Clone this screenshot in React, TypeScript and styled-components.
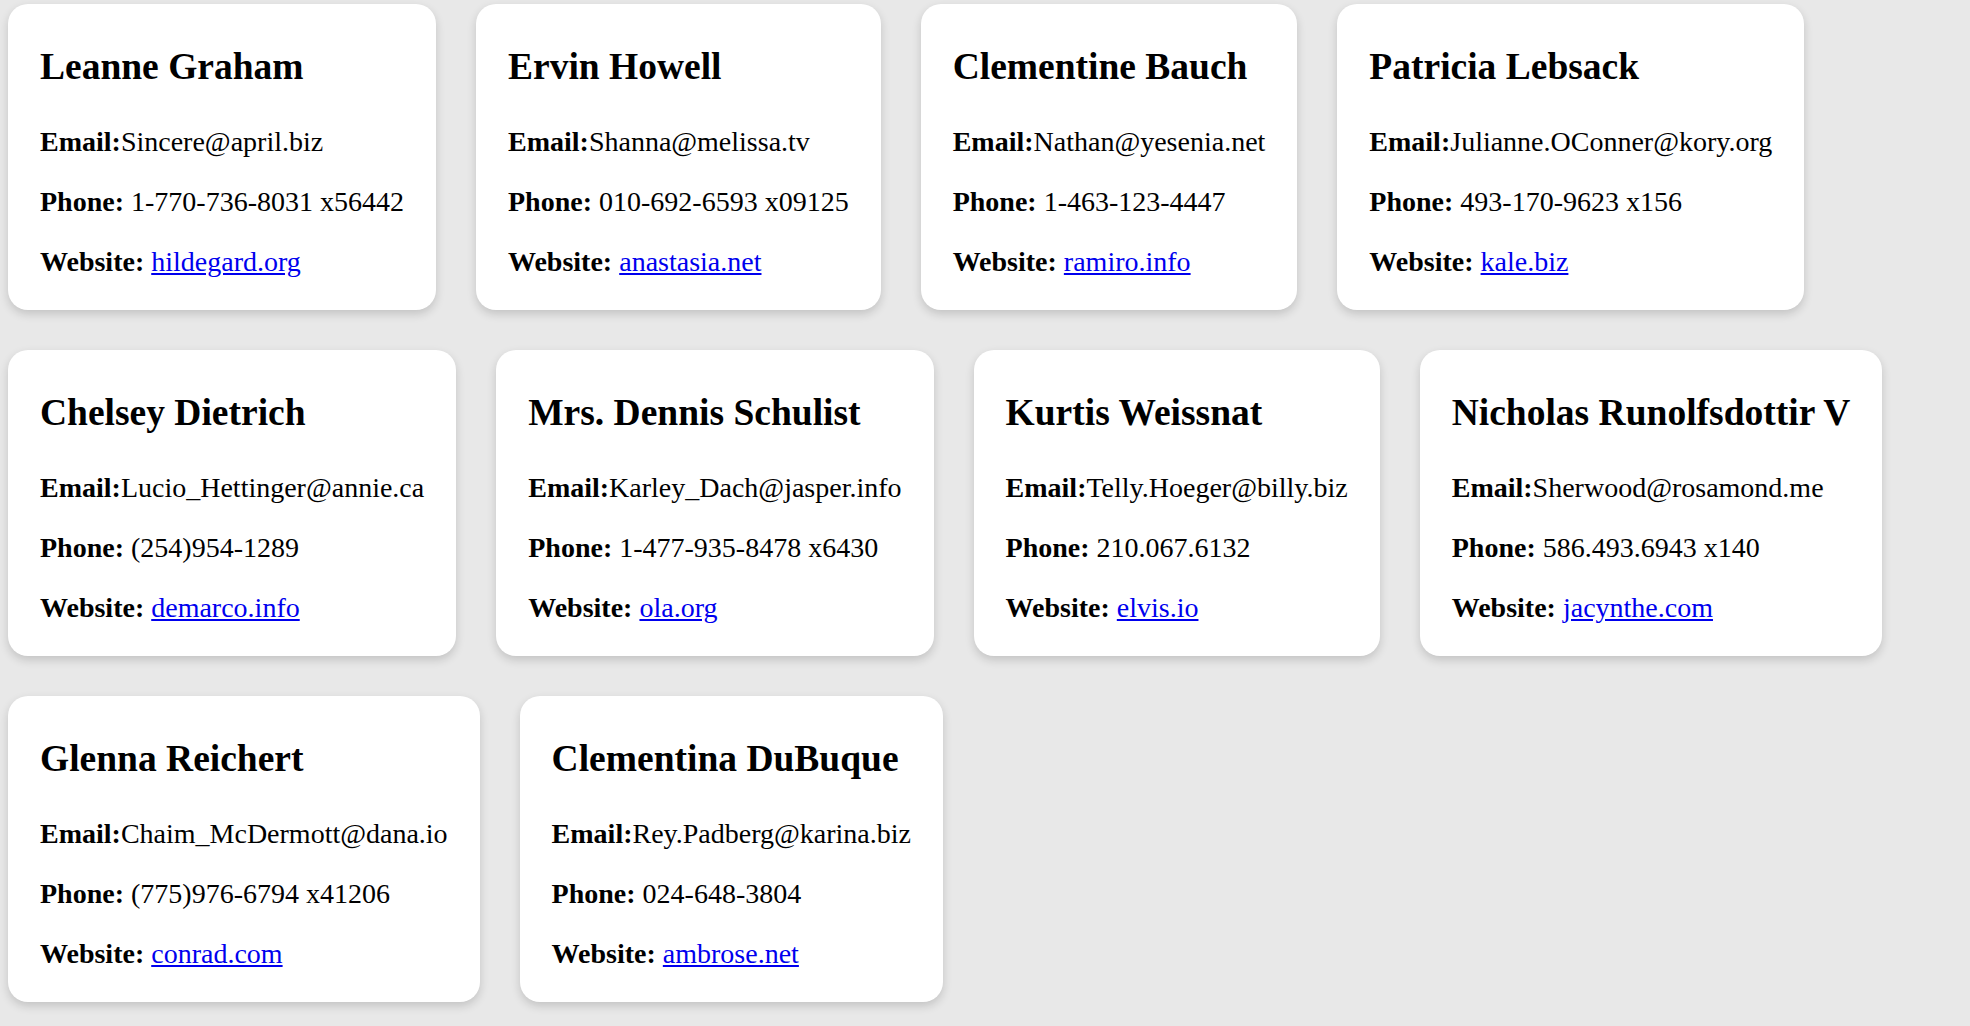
import React from "react";
import styled, { createGlobalStyle } from "styled-components";

const GlobalStyle = createGlobalStyle`
  html, body {
    margin: 0;
    padding: 0;
    background: #e8e8e8;
  }
  body {
    font-family: "Liberation Serif", "Times New Roman", serif;
    color: #000;
  }
`;

type User = {
  name: string;
  email: string;
  phone: string;
  website: string;
};

const users: User[] = [
  { name: "Leanne Graham", email: "Sincere@april.biz", phone: "1-770-736-8031 x56442", website: "hildegard.org" },
  { name: "Ervin Howell", email: "Shanna@melissa.tv", phone: "010-692-6593 x09125", website: "anastasia.net" },
  { name: "Clementine Bauch", email: "Nathan@yesenia.net", phone: "1-463-123-4447", website: "ramiro.info" },
  { name: "Patricia Lebsack", email: "Julianne.OConner@kory.org", phone: "493-170-9623 x156", website: "kale.biz" },
  { name: "Chelsey Dietrich", email: "Lucio_Hettinger@annie.ca", phone: "(254)954-1289", website: "demarco.info" },
  { name: "Mrs. Dennis Schulist", email: "Karley_Dach@jasper.info", phone: "1-477-935-8478 x6430", website: "ola.org" },
  { name: "Kurtis Weissnat", email: "Telly.Hoeger@billy.biz", phone: "210.067.6132", website: "elvis.io" },
  { name: "Nicholas Runolfsdottir V", email: "Sherwood@rosamond.me", phone: "586.493.6943 x140", website: "jacynthe.com" },
  { name: "Glenna Reichert", email: "Chaim_McDermott@dana.io", phone: "(775)976-6794 x41206", website: "conrad.com" },
  { name: "Clementina DuBuque", email: "Rey.Padberg@karina.biz", phone: "024-648-3804", website: "ambrose.net" },
];

const Grid = styled.div`
  display: flex;
  flex-wrap: wrap;
  align-items: stretch;
  gap: 40px;
  padding: 4px 8px 20px;
`;

const Card = styled.div`
  display: flex;
  flex-direction: column;
  background: #ffffff;
  border-radius: 20px;
  padding: 41px 32px 32px;
  box-shadow: 0 4px 10px rgba(0, 0, 0, 0.16);
  box-sizing: border-box;
`;

const Name = styled.h2`
  margin: 0 0 38px;
  font-size: 37.5px;
  line-height: 43px;
  font-weight: bold;
  white-space: nowrap;
`;

const Field = styled.p`
  margin: 0 0 28px;
  font-size: 28px;
  line-height: 32px;
  white-space: nowrap;

  &:last-child {
    margin-bottom: 0;
  }
`;

const Label = styled.strong`
  font-weight: bold;
`;

const Link = styled.a`
  color: #0000ee;
  text-decoration: underline;
`;

export default function App() {
  return (
    <>
      <GlobalStyle />
      <Grid>
        {users.map((u) => (
          <Card key={u.name}>
            <Name>{u.name}</Name>
            <Field>
              <Label>Email:</Label>
              {u.email}
            </Field>
            <Field>
              <Label>Phone:</Label> {u.phone}
            </Field>
            <Field>
              <Label>Website:</Label>{" "}
              <Link href={`http://${u.website}`}>{u.website}</Link>
            </Field>
          </Card>
        ))}
      </Grid>
    </>
  );
}
